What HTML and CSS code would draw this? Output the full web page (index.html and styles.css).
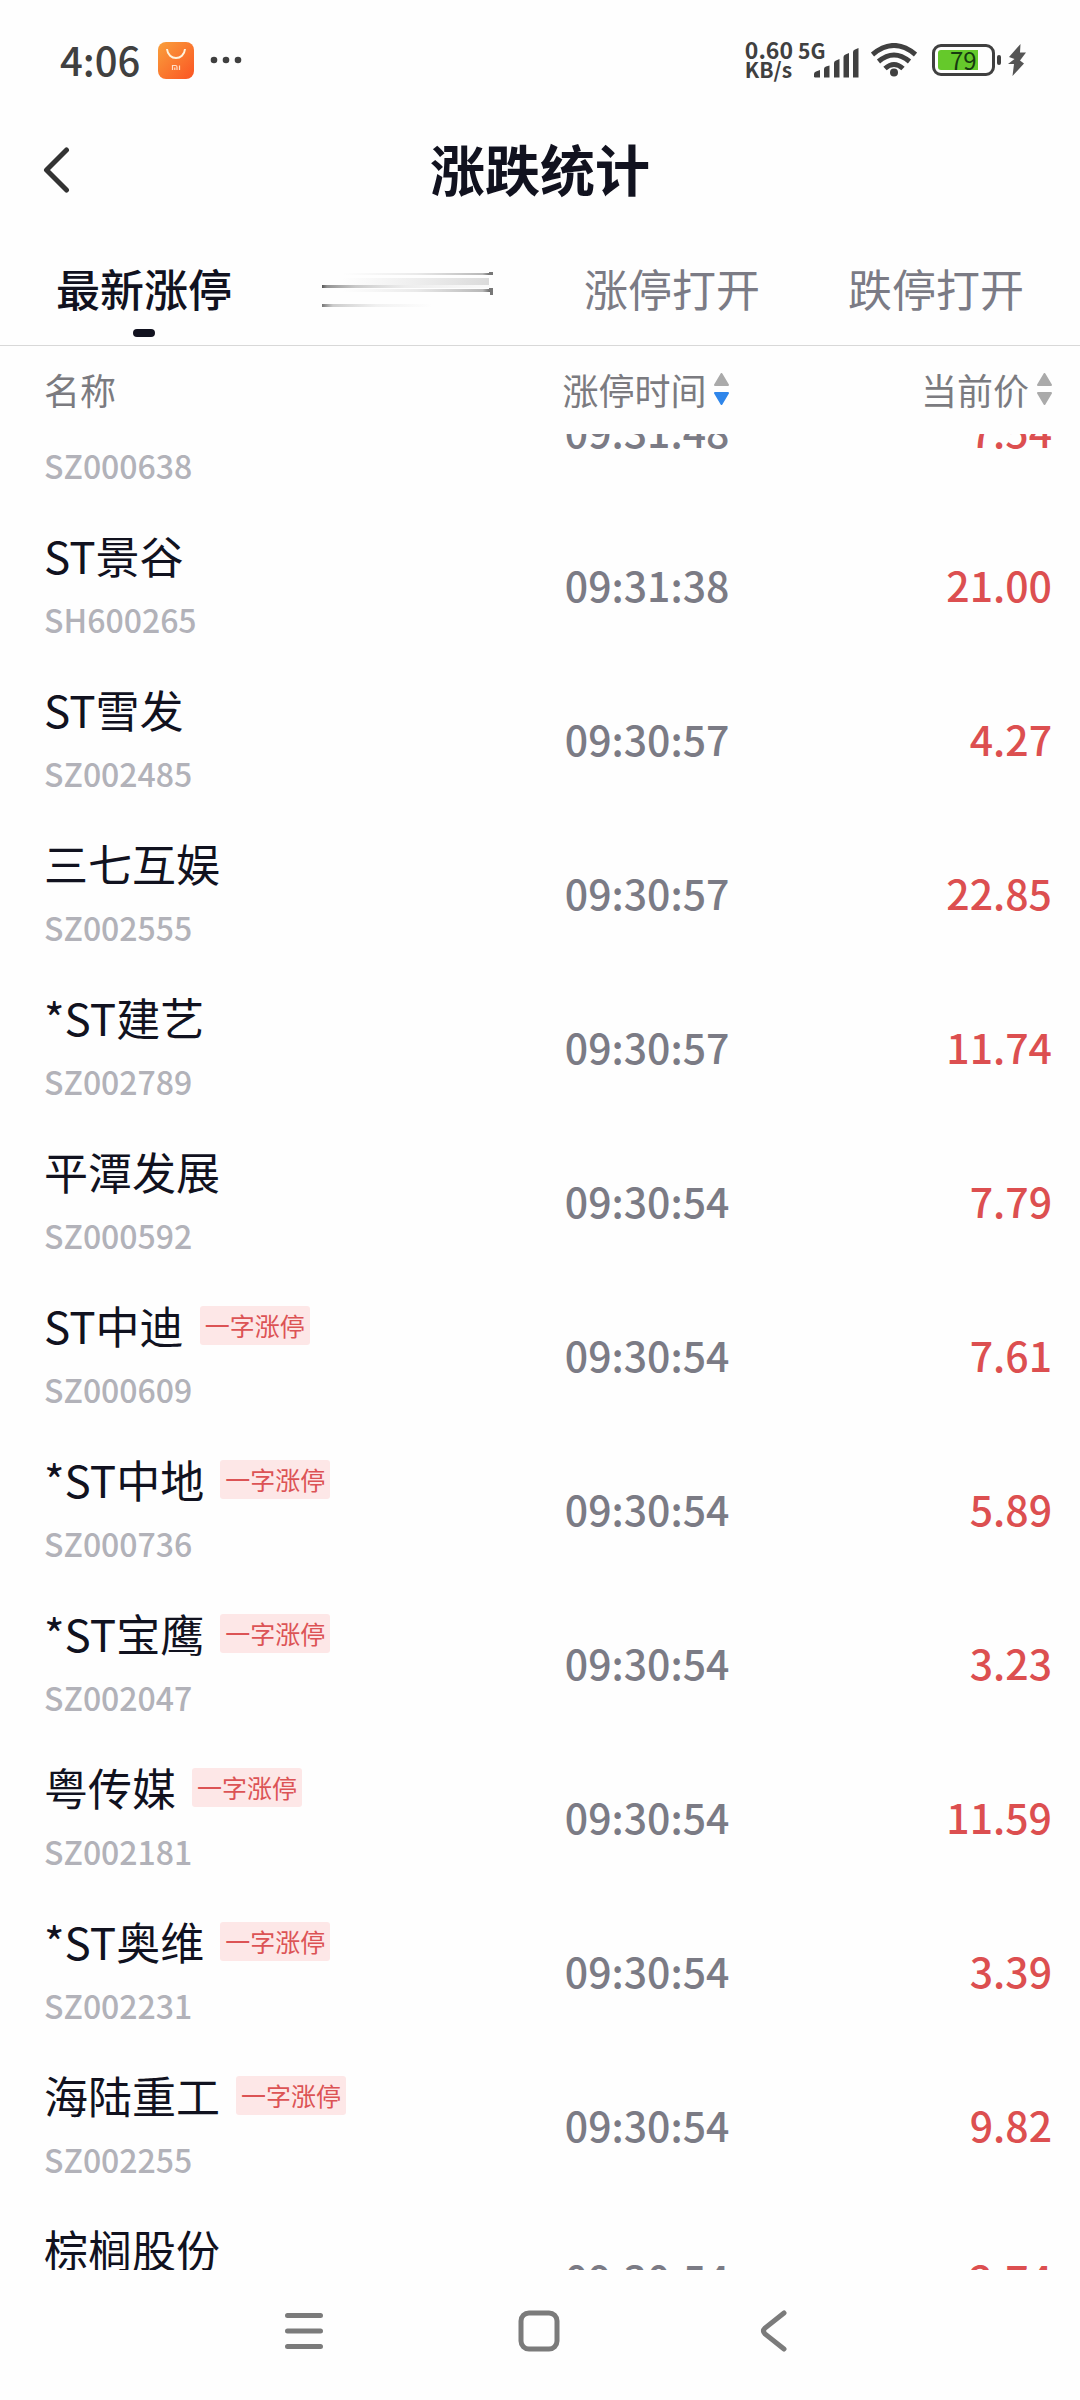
FILE: index.html
```html
<!DOCTYPE html>
<html lang="zh-CN">
<head>
<meta charset="utf-8">
<meta name="viewport" content="width=device-width, initial-scale=1">
<title>涨跌统计</title>
<link rel="stylesheet" href="styles.css">
</head>
<body>
<div class="app">
  <div class="status">
    <span class="clock">4:06</span>
    <svg class="store" width="36" height="37" viewBox="0 0 36 37" aria-hidden="true">
      <defs><linearGradient id="store-bg" x1="0" y1="0" x2="1" y2="1"><stop offset="0" stop-color="#f9a03c"/><stop offset="1" stop-color="#fb5423"/></linearGradient></defs>
      <rect width="36" height="37" rx="8" fill="url(#store-bg)"/>
      <path d="M9 7c1 12 17 12 18 0" fill="none" stroke="#fff3dc" stroke-width="2"/>
      <path d="M14.500 28v-4.500h3q1.500 0 1.500 1.500v3M16.800 25.500v2.500M21.500 23.500v4.500" fill="none" stroke="#ffe0c8" stroke-width="1.200"/>
    </svg>
    <svg class="more" width="32" height="8" viewBox="0 0 32 8" fill="#404040" aria-hidden="true"><circle cx="4" cy="4" r="3.300"/><circle cx="16" cy="4" r="3.300"/><circle cx="28" cy="4" r="3.300"/></svg>
    <span class="speed"><span class="rate">0.60</span><span class="unit">KB/s</span></span>
    <span class="cell">
      <span class="net">5G</span>
      <svg class="bars" width="45" height="30" viewBox="0 0 45 30" fill="#404040" aria-hidden="true">
        <path d="M0 29v-3q0-2 2-2.500l4-1.500v7.500H1z"/><path d="M10 29.500V21q0-2 2-2.600l3.500-1v12z"/><path d="M20 29.500V15q0-2 2-2.600l3.500-1.400v18.500z"/><path d="M29.500 29.500V9q0-2 2-2.600L35 5v24.500z"/><path d="M39 29.500V4q0-2 2-2.600L44.500 0v29.500z"/>
      </svg>
    </span>
    <svg class="wifi" width="46" height="34" viewBox="0 0 46 34" fill="none" stroke="#404040" stroke-width="5" aria-hidden="true">
      <path d="M1.500 11.500Q23-6.500 44.500 11.500"/><path d="M7.500 18.500Q23 5.500 38.500 18.500"/><path d="M14 25.500Q23 17.500 32 25.500"/><circle cx="23" cy="29.500" r="4" fill="#404040" stroke="none"/>
    </svg>
    <span class="battery"><span class="charge"></span><span class="level">79</span></span>
    <span class="nub"></span>
    <svg class="flash" width="18" height="32" viewBox="0 0 18 32" aria-hidden="true"><path d="M12.500 0L1 13l5.500 2L0 20h6L4.500 32 16 19.500l-4-3L18 8.500H12z" fill="#555"/></svg>
  </div>

  <header class="header">
    <button class="back" type="button" aria-label="返回">
      <svg width="28" height="50" viewBox="0 0 28 50" fill="none" stroke="#333" stroke-width="5" stroke-linecap="round" stroke-linejoin="round" aria-hidden="true"><path d="M24.500 5L4.500 25l20 20"/></svg>
    </button>
    <h1 class="title">涨跌统计</h1>
  </header>

  <nav class="tabs">
    <button class="tab active" type="button">最新涨停</button>
    <button class="tab" type="button" aria-label="最新跌停">
      <svg width="172" height="56" viewBox="0 0 172 56" aria-hidden="true">
        <defs>
          <linearGradient id="fade-r"><stop offset="0" stop-color="#555"/><stop offset=".03" stop-color="#777" stop-opacity=".8"/><stop offset=".2" stop-color="#888" stop-opacity=".45"/><stop offset=".5" stop-color="#aaa" stop-opacity=".2"/><stop offset="1" stop-color="#aaa" stop-opacity=".05"/></linearGradient>
          <linearGradient id="fade-l"><stop offset="0" stop-color="#aaa" stop-opacity="0"/><stop offset=".5" stop-color="#999" stop-opacity=".2"/><stop offset=".95" stop-color="#888" stop-opacity=".6"/><stop offset="1" stop-color="#666"/></linearGradient>
          <linearGradient id="haze"><stop offset="0" stop-color="#aaa" stop-opacity="0"/><stop offset="1" stop-color="#999" stop-opacity=".35"/></linearGradient>
          <linearGradient id="dash"><stop offset="0" stop-color="#777"/><stop offset=".1" stop-color="#999" stop-opacity=".5"/><stop offset=".5" stop-color="#aaa" stop-opacity=".15"/><stop offset="1" stop-color="#aaa" stop-opacity="0"/></linearGradient>
        </defs>
        <rect x="0" y="25" width="168" height="3" fill="url(#fade-r)"/>
        <rect x="0" y="44" width="110" height="3" fill="url(#dash)"/>
        <rect x="20" y="13" width="148" height="2" fill="url(#fade-l)"/>
        <rect x="20" y="18" width="147" height="7" fill="url(#haze)"/>
        <rect x="20" y="29" width="148" height="3" fill="url(#fade-l)"/>
        <path d="M167 12h4v3h-4zM167 28h4v7h-3v-4h-1z" fill="#777"/>
      </svg>
    </button>
    <button class="tab" type="button">涨停打开</button>
    <button class="tab" type="button">跌停打开</button>
  </nav>

  <main class="list">
    <table class="stocks">
      <thead>
        <tr>
          <th class="name">名称</th>
          <th class="time"><button class="sort" type="button">涨停时间<svg width="15" height="32" viewBox="0 0 15 32" aria-hidden="true"><path d="M7.500 1L14 12H1z" fill="#aaa" stroke="#aaa" stroke-linejoin="round" stroke-width="2"/><path d="M7.500 31L14 20H1z" fill="#2f86ea" stroke="#2f86ea" stroke-linejoin="round" stroke-width="2"/></svg></button></th>
          <th class="price"><button class="sort" type="button">当前价<svg width="15" height="32" viewBox="0 0 15 32" fill="#aaa" stroke="#aaa" stroke-linejoin="round" stroke-width="2" aria-hidden="true"><path d="M7.500 1L14 12H1z"/><path d="M7.500 31L14 20H1z"/></svg></button></th>
        </tr>
      </thead>
      <tbody id="rows">
        <tr><td class="name"><div class="stock">万方发展</div><div class="code">SZ000638</div></td><td class="time">09:31:48</td><td class="price">7.54</td></tr>
        <tr><td class="name"><div class="stock">ST景谷</div><div class="code">SH600265</div></td><td class="time">09:31:38</td><td class="price">21.00</td></tr>
        <tr><td class="name"><div class="stock">ST雪发</div><div class="code">SZ002485</div></td><td class="time">09:30:57</td><td class="price">4.27</td></tr>
        <tr><td class="name"><div class="stock">三七互娱</div><div class="code">SZ002555</div></td><td class="time">09:30:57</td><td class="price">22.85</td></tr>
        <tr><td class="name"><div class="stock">*ST建艺</div><div class="code">SZ002789</div></td><td class="time">09:30:57</td><td class="price">11.74</td></tr>
        <tr><td class="name"><div class="stock">平潭发展</div><div class="code">SZ000592</div></td><td class="time">09:30:54</td><td class="price">7.79</td></tr>
        <tr><td class="name"><div class="stock">ST中迪<span class="tag">一字涨停</span></div><div class="code">SZ000609</div></td><td class="time">09:30:54</td><td class="price">7.61</td></tr>
        <tr><td class="name"><div class="stock">*ST中地<span class="tag">一字涨停</span></div><div class="code">SZ000736</div></td><td class="time">09:30:54</td><td class="price">5.89</td></tr>
        <tr><td class="name"><div class="stock">*ST宝鹰<span class="tag">一字涨停</span></div><div class="code">SZ002047</div></td><td class="time">09:30:54</td><td class="price">3.23</td></tr>
        <tr><td class="name"><div class="stock">粤传媒<span class="tag">一字涨停</span></div><div class="code">SZ002181</div></td><td class="time">09:30:54</td><td class="price">11.59</td></tr>
        <tr><td class="name"><div class="stock">*ST奥维<span class="tag">一字涨停</span></div><div class="code">SZ002231</div></td><td class="time">09:30:54</td><td class="price">3.39</td></tr>
        <tr><td class="name"><div class="stock">海陆重工<span class="tag">一字涨停</span></div><div class="code">SZ002255</div></td><td class="time">09:30:54</td><td class="price">9.82</td></tr>
        <tr><td class="name"><div class="stock">棕榈股份</div><div class="code">SZ002431</div></td><td class="time">09:30:54</td><td class="price">2.74</td></tr>
      </tbody>
    </table>
  </main>

  <nav class="system">
    <button type="button" aria-label="最近任务"><svg width="40" height="40" viewBox="0 0 40 40" stroke="#7b7b7b" stroke-width="5" stroke-linecap="round" aria-hidden="true"><path d="M3.500 4.500h33M3.500 20h33M3.500 35.500h33"/></svg></button>
    <button type="button" aria-label="主屏幕"><svg width="42" height="42" viewBox="0 0 42 42" fill="none" stroke="#7b7b7b" stroke-width="5" aria-hidden="true"><rect x="3" y="3" width="36" height="36" rx="8"/></svg></button>
    <button type="button" aria-label="返回上一页"><svg width="28" height="42" viewBox="0 0 28 42" fill="none" stroke="#7b7b7b" stroke-width="5" stroke-linecap="round" aria-hidden="true"><path d="M24 3L5 18q-3 3 0 6l19 15"/></svg></button>
  </nav>
</div>
<script>
  document.getElementById("rows").scrollTop = 79;
</script>
</body>
</html>
```
FILE: styles.css
```css
* { box-sizing: border-box; }

body {
  margin: 0;
  background: #fefefe;
  color: #11121f;
  font-family: "Noto Sans CJK SC", "Noto Sans", sans-serif;
}

button {
  margin: 0;
  padding: 0;
  border: 0;
  background: none;
  color: inherit;
  font: inherit;
}

svg { display: block; flex: none; }

.app {
  display: flex;
  flex-direction: column;
  height: 100vh;
}

/* Status bar */
.status {
  display: flex;
  align-items: center;
  height: 120px;
  padding: 0 54px 0 60px;
  color: #404040;
}

.clock { padding-bottom: 2px; font-size: 40px; line-height: 40px; font-weight: 500; }
.store { margin-left: 18px; }
.more { margin-left: 16px; margin-right: auto; }

.speed {
  display: flex;
  flex-direction: column;
  padding-bottom: 2px;
  font-weight: 700;
  line-height: 20px;
}

.rate { font-size: 23px; }
.unit { font-size: 21px; }

.cell {
  display: grid;
  margin-left: 5px;
  height: 36px;
}

.net { grid-area: 1 / 1; font-size: 21px; line-height: 16px; font-weight: 700; }
.bars { grid-area: 1 / 1; align-self: end; margin-left: 16px; }
.wifi { margin-left: 12px; }

.battery {
  display: grid;
  align-items: center;
  width: 63px;
  height: 32px;
  margin-left: 15px;
  padding: 0 3px;
  border: 3px solid #404040;
  border-radius: 9px;
}

.charge { grid-area: 1 / 1; width: 40px; height: 20px; border-radius: 3px 0 0 3px; background: #65c92b; }
.level { grid-area: 1 / 1; padding-left: 12px; font-size: 24px; line-height: 20px; color: #163a10; }
.nub { width: 4px; height: 10px; margin-left: 2px; border-radius: 2px; background: #404040; }
.flash { margin-left: 7px; }

/* Title bar */
.header {
  display: grid;
  grid-template-columns: 1fr auto 1fr;
  align-items: center;
  height: 100px;
  padding: 0 42px;
}

.back { justify-self: start; }
.title { margin: 0; padding-bottom: 6px; font-size: 55px; line-height: 64px; font-weight: 700; }

/* Tabs */
.tabs {
  display: flex;
  height: 126px;
  padding: 0 12px;
  border-bottom: 1px solid #d8d8d8;
}

.tab {
  display: flex;
  flex: 1;
  flex-direction: column;
  align-items: center;
  padding-top: 40px;
  color: #7b7b85;
  font-size: 44px;
  line-height: 56px;
}

.tab.active { color: #11121f; font-weight: 500; }

.tab.active::after {
  content: "";
  width: 22px;
  height: 8px;
  margin-top: 13px;
  border-radius: 4px;
  background: #11121f;
}

/* Stock list */
.list { flex: 1; min-height: 0; }

.stocks {
  display: flex;
  flex-direction: column;
  height: 100%;
}

thead { display: block; }

tbody {
  display: block;
  flex: 1;
  min-height: 0;
  overflow-y: auto;
  scrollbar-width: none;
}

tr {
  display: grid;
  grid-template-columns: 38fr 30fr 32fr;
  align-items: center;
  height: 154px;
  padding: 0 28px 0 44px;
}

thead tr { height: 88px; padding-bottom: 2px; }

th {
  padding: 0;
  color: #7b7b80;
  font-size: 36px;
  line-height: 44px;
  font-weight: 400;
  text-align: left;
}

td { padding: 0; }

td.time, td.price {
  padding-bottom: 4px;
  font-size: 41px;
  line-height: 50px;
  font-weight: 500;
  text-align: right;
}

td.time { color: #7b7b85; }
td.price { color: #dc4f50; }

.sort { display: flex; align-items: center; gap: 8px; margin-left: auto; }

.stock {
  display: flex;
  align-items: center;
  height: 64px;
  padding-top: 2px;
  font-size: 44px;
  font-weight: 400;
}

.tag {
  margin-left: 16px;
  padding: 0 5px;
  border-radius: 3px;
  background: #fde7e7;
  color: #dc5355;
  font-size: 25px;
  line-height: 39px;
}

.code { height: 64px; padding-top: 9px; color: #b2b2b9; font-size: 32px; line-height: 48px; font-weight: 500; }

/* System navigation */
.system {
  display: flex;
  justify-content: center;
  align-items: center;
  gap: 175px;
  height: 130px;
  padding: 0 2px 8px 0;
}

.system button { display: flex; justify-content: center; width: 60px; }
```
